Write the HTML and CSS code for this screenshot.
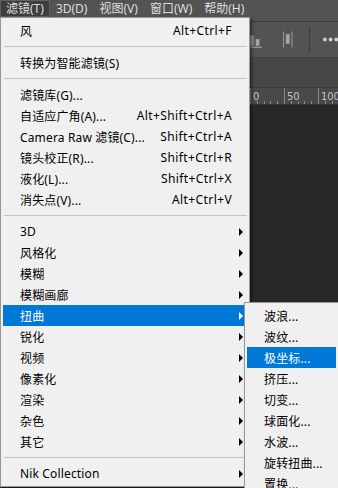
FILE: index.html
```html
<!DOCTYPE html>
<html>

<head>
    <meta charset="UTF-8">
    <title>滤镜菜单</title>
    <link rel="stylesheet" href="styles.css">
</head>

<body>
    <div class="app">
        <div class="menubar">
            <div class="menubar-item active">滤镜(T)</div>
            <div class="menubar-item">3D(D)</div>
            <div class="menubar-item">视图(V)</div>
            <div class="menubar-item">窗口(W)</div>
            <div class="menubar-item">帮助(H)</div>
        </div>
        <div class="optionsbar">
            <svg class="icon-align" width="14" height="13" viewBox="0 0 14 13">
                <rect x="1" y="0" width="4" height="11" fill="#8f8f8f" />
                <rect x="7" y="4" width="4" height="7" fill="#a3a3a3" />
                <rect x="0" y="12" width="14" height="1" fill="#b0b0b0" />
            </svg>
            <svg class="icon-dist" width="11" height="17" viewBox="0 0 11 17">
                <rect x="0" y="0" width="1" height="17" fill="#9a9a9a" />
                <rect x="9" y="0" width="1" height="17" fill="#9a9a9a" />
                <rect x="3" y="3" width="4" height="10" fill="#a5a5a5" />
            </svg>
            <div class="tool-sep"></div>
            <svg class="icon-more" width="16" height="5" viewBox="0 0 16 5">
                <circle cx="2" cy="2.5" r="2" fill="#cfcfcf" />
                <circle cx="8" cy="2.5" r="2" fill="#cfcfcf" />
                <circle cx="14" cy="2.5" r="2" fill="#cfcfcf" />
            </svg>
        </div>
        <div class="tabbar"></div>
        <div class="ruler">
            <div class="ruler-seg">0</div>
            <div class="ruler-seg">50</div>
            <div class="ruler-seg">100</div>
        </div>
        <div class="canvas"></div>
    </div>

    <div class="menu main-menu">
        <div class="item"><span class="label">风</span><span class="key">Alt+Ctrl+F</span></div>
        <div class="sep"></div>
        <div class="item"><span class="label">转换为智能滤镜(S)</span></div>
        <div class="sep"></div>
        <div class="item"><span class="label">滤镜库(G)...</span></div>
        <div class="item"><span class="label">自适应广角(A)...</span><span class="key">Alt+Shift+Ctrl+A</span></div>
        <div class="item"><span class="label">Camera Raw 滤镜(C)...</span><span class="key">Shift+Ctrl+A</span></div>
        <div class="item"><span class="label">镜头校正(R)...</span><span class="key">Shift+Ctrl+R</span></div>
        <div class="item"><span class="label">液化(L)...</span><span class="key">Shift+Ctrl+X</span></div>
        <div class="item"><span class="label">消失点(V)...</span><span class="key">Alt+Ctrl+V</span></div>
        <div class="sep"></div>
        <div class="item"><span class="label">3D</span><span class="arrow"></span></div>
        <div class="item"><span class="label">风格化</span><span class="arrow"></span></div>
        <div class="item"><span class="label">模糊</span><span class="arrow"></span></div>
        <div class="item"><span class="label">模糊画廊</span><span class="arrow"></span></div>
        <div class="item selected"><span class="label">扭曲</span><span class="arrow"></span></div>
        <div class="item"><span class="label">锐化</span><span class="arrow"></span></div>
        <div class="item"><span class="label">视频</span><span class="arrow"></span></div>
        <div class="item"><span class="label">像素化</span><span class="arrow"></span></div>
        <div class="item"><span class="label">渲染</span><span class="arrow"></span></div>
        <div class="item"><span class="label">杂色</span><span class="arrow"></span></div>
        <div class="item"><span class="label">其它</span><span class="arrow"></span></div>
        <div class="sep"></div>
        <div class="item"><span class="label">Nik Collection</span><span class="arrow"></span></div>
    </div>

    <div class="menu sub-menu">
        <div class="item"><span class="label">波浪...</span></div>
        <div class="item"><span class="label">波纹...</span></div>
        <div class="item selected"><span class="label">极坐标...</span></div>
        <div class="item"><span class="label">挤压...</span></div>
        <div class="item"><span class="label">切变...</span></div>
        <div class="item"><span class="label">球面化...</span></div>
        <div class="item"><span class="label">水波...</span></div>
        <div class="item"><span class="label">旋转扭曲...</span></div>
        <div class="item"><span class="label">置换...</span></div>
    </div>
</body>

</html>
```

FILE: styles.css
```css
body {
    margin: 0;
    width: 338px;
    height: 488px;
    overflow: hidden;
    position: relative;
    background-color: #282828;
    font-family: "Noto Sans", "Noto Sans CJK SC", sans-serif;
}

/* Photoshop window behind the menu */
.app {
    display: flex;
    flex-direction: column;
    height: 488px;
}

.menubar {
    display: flex;
    height: 21px;
    background-color: #535353;
    border-bottom: 1px solid #3a3a3a;
}

.menubar-item {
    height: 17px;
    line-height: 16px;
    padding: 0 5px;
    font-size: 12px;
    color: #dedede;
    box-sizing: border-box;
    border: 1px solid transparent;
}

.menubar-item.active {
    background-color: #3e3e3e;
    border-color: #5f5f5f;
}

.optionsbar {
    display: flex;
    align-items: center;
    height: 35px;
    padding-left: 249px;
    background-color: #535353;
    border-bottom: 1px solid #444;
}

.icon-align {
    margin-top: 4px;
}

.icon-dist {
    margin-left: 21px;
}

.tool-sep {
    width: 1px;
    height: 25px;
    margin-left: 15px;
    background-color: #3b3b3b;
}

.icon-more {
    margin-left: 13px;
}

.tabbar {
    height: 29px;
    background-color: #474747;
    border-bottom: 1px solid #3c3c3c;
}

.ruler {
    display: flex;
    height: 16px;
    padding-left: 250px;
    background-color: #494949;
    background-image: repeating-linear-gradient(to right, #8a8a8a 0 1px, transparent 1px 6.8px);
    background-size: 100% 3px;
    background-position: 250px 100%;
    background-repeat: no-repeat;
    border-bottom: 1px solid #333;
}

.ruler-seg {
    width: 34px;
    flex-shrink: 0;
    box-sizing: border-box;
    border-left: 1px solid #8a8a8a;
    padding-left: 2px;
    font-family: "DejaVu Sans Condensed", "DejaVu Sans", sans-serif;
    font-size: 11px;
    line-height: 17px;
    color: #c4c4c4;
    background-color: #494949;
    height: 13px;
}

.canvas {
    flex: 1;
    background-color: #282828;
}

/* Windows menus */
.menu {
    position: absolute;
    box-sizing: border-box;
    background-color: #f0f0f0;
    border: 1px solid #979797;
    padding: 2px 0;
    box-shadow: 2px 2px 3px rgba(0, 0, 0, 0.45);
}

.main-menu {
    left: 0;
    top: 17px;
    width: 250px;
}

.sub-menu {
    left: 244px;
    top: 302px;
    width: 95px;
    height: 200px;
}

.item {
    display: flex;
    align-items: center;
    height: 21px;
    margin: 0 2px;
    padding: 0 4px 0 17px;
    font-size: 12px;
    color: #000;
    white-space: nowrap;
}

.item .label {
    flex: 1;
    letter-spacing: 0.15px;
}

.item .key {
    margin-right: 11px;
    letter-spacing: 0.4px;
}

.item .arrow {
    width: 0;
    height: 0;
    border-left: 4px solid #000;
    border-top: 4px solid transparent;
    border-bottom: 4px solid transparent;
}

.item.selected {
    background-color: #0078d7;
    color: #fff;
}

.item.selected .arrow {
    border-left-color: #fff;
}

.sep {
    height: 1px;
    margin: 5px 2px 5px 3px;
    background-color: #c4c4c4;
}
```
